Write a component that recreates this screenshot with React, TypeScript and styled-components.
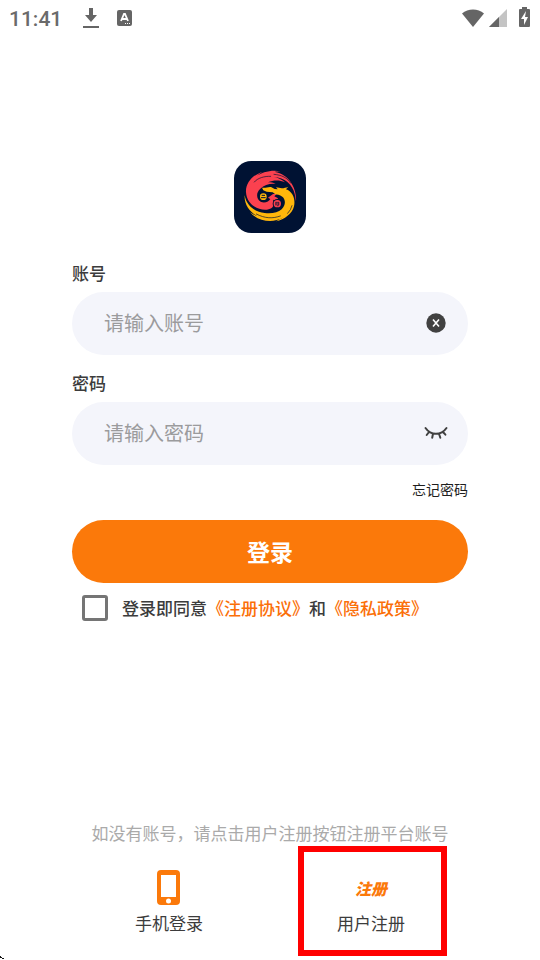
import React, { useState } from "react";
import styled, { createGlobalStyle } from "styled-components";

const GlobalStyle = createGlobalStyle`
  * { box-sizing: border-box; }
  body {
    margin: 0;
    background: #fff;
    color: #3c3c3c;
    font-family: "Noto Sans CJK SC", sans-serif;
  }
  button, input { font-family: inherit; }
`;

const Page = styled.div`
  position: relative;
  display: flex;
  flex-direction: column;
  min-height: 100vh;
  overflow: hidden;
`;

const StatusBar = styled.header`
  display: flex;
  justify-content: space-between;
  align-items: center;
  height: 36px;
  padding: 0 9px;
  color: #656565;
`;

const StatusGroup = styled.div<{ $gap: number }>`
  display: flex;
  align-items: center;
  gap: ${(p) => p.$gap}px;
`;

const Clock = styled.span`
  margin-right: 4px;
  padding-top: 2px;
  color: #6a6a6a;
  font: 500 21px/24px Roboto, sans-serif;
`;

const Form = styled.form`
  display: flex;
  flex-direction: column;
  margin-top: 125px;
  padding: 0 72px;
`;

const Logo = styled.svg`
  align-self: center;
  width: 72px;
  height: 72px;
  margin-bottom: 28px;
`;

const Fields = styled.div`
  display: flex;
  flex-direction: column;
  gap: 16px;
  margin-bottom: 14px;
`;

const Field = styled.div`
  display: flex;
  flex-direction: column;
  gap: 7px;
`;

const Label = styled.label`
  font-size: 17px;
  font-weight: 500;
  line-height: 24px;
`;

const InputShell = styled.div`
  display: flex;
  align-items: center;
  height: 63px;
  padding: 0 20px 2px 32px;
  border-radius: 32px;
  background: #f4f5fb;
`;

const TextInput = styled.input`
  flex: 1;
  min-width: 0;
  height: 40px;
  padding: 0;
  border: 0;
  outline: 0;
  background: transparent;
  color: #3c3c3c;
  font-size: 20px;
  &::placeholder { color: #9b9b9d; opacity: 1; }
`;

const IconButton = styled.button`
  display: flex;
  padding: 0;
  border: 0;
  background: none;
  color: #414141;
`;

const ForgotLink = styled.a`
  align-self: flex-end;
  margin-bottom: 21px;
  color: #1e1e1e;
  font-size: 14px;
  line-height: 20px;
  text-decoration: none;
`;

const LoginButton = styled.button`
  height: 63px;
  padding: 0 0 2px;
  border: 0;
  border-radius: 32px;
  background: #fb790a;
  color: #fff;
  font-size: 23px;
  font-weight: 700;
`;

const Agreement = styled.div`
  display: flex;
  align-items: center;
  gap: 14px;
  margin-top: 12px;
  padding-left: 10px;
  font-size: 17px;
  font-weight: 500;
  line-height: 26px;
  white-space: nowrap;
`;

const Checkbox = styled.input`
  appearance: none;
  flex: none;
  width: 26px;
  height: 26px;
  margin: 0;
  border: 3px solid #757575;
  border-radius: 3px;
  &:checked { background: #fb790a; }
`;

const PolicyLink = styled.a`
  color: #fb6f08;
  text-decoration: none;
`;

const Footer = styled.footer`
  margin-top: auto;
  padding: 0 68px 25px;
`;

const Hint = styled.p`
  margin: 0 0 25px;
  color: #aaa;
  font-size: 17px;
  line-height: 24px;
  text-align: center;
  white-space: nowrap;
`;

const Options = styled.nav`
  display: grid;
  grid-template-columns: 1fr 1fr;
  justify-items: center;
`;

const Option = styled.button`
  position: relative;
  display: flex;
  flex-direction: column;
  align-items: center;
  gap: 5px;
  padding: 0;
  border: 0;
  background: none;
  color: #3c3c3c;
  font-size: 17px;
  line-height: 24px;
`;

const OptionIcon = styled.span`
  display: flex;
  align-items: center;
  justify-content: center;
  height: 36px;
`;

const RegisterMark = styled.span`
  color: #fb790a;
  font-size: 16px;
  font-style: italic;
  font-weight: 900;
  line-height: 20px;
`;

const Highlight = styled.span`
  position: absolute;
  inset: -24px -42px -21px -39px;
  border: 6px solid #f00;
  pointer-events: none;
`;

const Corner = styled.svg`
  position: absolute;
  left: 0;
  bottom: 0;
`;

function DragonLogo() {
  return (
    <Logo viewBox="27 27 216 216" role="img" aria-label="双龙">
      <rect x="27" y="27" width="216" height="216" rx="52" fill="#001233" />
      <path
        fill="#fb414f"
        d="M213 148C216 108 192 68 150 60C153 57 162 59 167 59C145 52 110 60 93 74C101 66 107 62 115 59C82 68 61 94 63 121C65 155 96 176 126 173C146 171 150 156 144 143L155 146L159 139L148 133L155 126L144 126L129 137L136 141C132 149 118 155 107 149C94 141 92 122 106 110C118 98 136 94 152 96C145 92 138 91 129 91C146 84 164 84 180 91C168 80 155 77 147 75C178 76 203 98 209 126Z"
      />
      <path
        fill="none"
        stroke="#001233"
        strokeWidth="2"
        strokeLinecap="round"
        d="M88 90C97 78 119 72 137 73M147 67C170 69 187 77 197 93"
      />
      <path
        fill="#ffb70b"
        d="M111 107C122 109 128 104 138 105L149 111L158 112L153 106C169 110 178 109 190 104L183 112C203 119 212 141 207 163C202 185 179 203 153 208C163 203 169 200 174 196C143 217 98 207 75 181C86 188 90 190 96 191C73 180 57 155 59 130C64 160 87 179 119 183C141 186 159 181 170 172C183 160 182 142 172 134C164 128 156 128 150 126L143 121L125 119L115 115Z"
      />
      <path
        fill="none"
        stroke="#001233"
        strokeWidth="2"
        strokeLinecap="round"
        d="M94 186C120 200 144 200 166 192M188 184Q198 174 201 161"
      />
      <circle cx="115" cy="134" r="13" fill="#001233" />
      <circle cx="115" cy="134" r="10" fill="#ffb70b" />
      <path fill="none" stroke="#001233" strokeWidth="3" d="M110 130H120M108 137H122" />
      <circle cx="157" cy="155" r="14" fill="#001233" />
      <circle cx="157" cy="155" r="11" fill="#fb414f" />
      <path fill="none" stroke="#001233" strokeWidth="2" d="M151 151H163M150 156H164M153 151V161M160 151V161H156" />
    </Logo>
  );
}

const ClearIcon = () => (
  <svg width="24" height="24" viewBox="0 0 24 24" aria-hidden="true">
    <circle cx="12" cy="12" r="9.7" fill="currentColor" />
    <path d="M9 8.5l6 7M15 8.5l-6 7" stroke="#fff" strokeWidth="1.6" />
  </svg>
);

const ClosedEyeIcon = () => (
  <svg
    width="24"
    height="24"
    viewBox="0 0 24 24"
    fill="none"
    stroke="currentColor"
    strokeWidth="2"
    strokeLinecap="round"
    aria-hidden="true"
  >
    <path d="M1.5 7C7 14.8 17 14.8 22.5 7M5 11l-2.3 3M9 12.8l-.8 4M15 12.8l1.3 4M19 11l2.4 2.7" />
  </svg>
);

const PhoneIcon = () => (
  <svg width="24" height="36" viewBox="0 0 24 36" aria-hidden="true">
    <rect width="23" height="35" rx="4" fill="#fb790a" />
    <rect x="4" y="5" width="15" height="22" fill="#fff" />
    <circle cx="11.5" cy="31" r="2.5" fill="#fff" />
  </svg>
);

export default function App() {
  const [account, setAccount] = useState("");
  const [password, setPassword] = useState("");
  const [visible, setVisible] = useState(false);
  const [agreed, setAgreed] = useState(false);

  return (
    <Page>
      <GlobalStyle />
      <StatusBar>
        <StatusGroup $gap={17}>
          <Clock>11:41</Clock>
          <svg width="16" height="22" viewBox="0 0 16 22" fill="currentColor" aria-hidden="true">
            <path d="M6 1h4v7h4l-6 7-6-7h4zM0 19h16v2H0z" />
          </svg>
          <svg width="16" height="18" viewBox="0 0 16 18" aria-hidden="true">
            <rect x="1" y="1" width="15" height="16" rx="2" fill="currentColor" />
            <path d="M5 12l3-7h1l3 7M6 10h5" fill="none" stroke="#fff" strokeWidth="1.8" />
            <path d="M9 14h1v1H9zm2 0h1v1h-1zm2 0h1v1h-1z" fill="#fff" />
          </svg>
        </StatusGroup>
        <StatusGroup $gap={4}>
          <svg width="24" height="20" viewBox="0 0 24 20" fill="currentColor" aria-hidden="true">
            <path d="M1 5.5C7 .3 17 .3 23 5.5L12 19z" />
          </svg>
          <svg width="18" height="20" viewBox="0 0 18 20" aria-hidden="true">
            <path d="M18 1v18H0z" fill="#c4c4c4" />
            <path d="M10 9v10H0z" fill="currentColor" />
          </svg>
          <svg width="20" height="22" viewBox="-8 0 20 22" aria-hidden="true">
            <path d="M3 0h5v2h2q1 0 1 1v16q0 1-1 1H1q-1 0-1-1V3q0-1 1-1h2z" fill="currentColor" />
            <path d="M7 4L2 12h3v6l4-8H6z" fill="#fff" />
          </svg>
        </StatusGroup>
      </StatusBar>

      <Form onSubmit={(e) => e.preventDefault()}>
        <DragonLogo />
        <Fields>
          <Field>
            <Label htmlFor="account">账号</Label>
            <InputShell>
              <TextInput
                id="account"
                placeholder="请输入账号"
                value={account}
                onChange={(e) => setAccount(e.target.value)}
              />
              <IconButton type="button" aria-label="清除" onClick={() => setAccount("")}>
                <ClearIcon />
              </IconButton>
            </InputShell>
          </Field>
          <Field>
            <Label htmlFor="password">密码</Label>
            <InputShell>
              <TextInput
                id="password"
                type={visible ? "text" : "password"}
                placeholder="请输入密码"
                value={password}
                onChange={(e) => setPassword(e.target.value)}
              />
              <IconButton type="button" aria-label="显示密码" onClick={() => setVisible(!visible)}>
                <ClosedEyeIcon />
              </IconButton>
            </InputShell>
          </Field>
        </Fields>
        <ForgotLink href="#forgot">忘记密码</ForgotLink>
        <LoginButton type="submit">登录</LoginButton>
        <Agreement>
          <Checkbox
            id="agree"
            type="checkbox"
            checked={agreed}
            onChange={(e) => setAgreed(e.target.checked)}
          />
          <label htmlFor="agree">
            登录即同意<PolicyLink href="#terms">《注册协议》</PolicyLink>和
            <PolicyLink href="#privacy">《隐私政策》</PolicyLink>
          </label>
        </Agreement>
      </Form>

      <Footer>
        <Hint>如没有账号，请点击用户注册按钮注册平台账号</Hint>
        <Options>
          <Option type="button">
            <OptionIcon><PhoneIcon /></OptionIcon>
            手机登录
          </Option>
          <Option type="button">
            <OptionIcon><RegisterMark>注册</RegisterMark></OptionIcon>
            用户注册
            <Highlight />
          </Option>
        </Options>
      </Footer>
      <Corner width="4" height="5" viewBox="0 0 4 5" aria-hidden="true">
        <path d="M0 1h1v1h1v1h2v1H2V3H0z" fill="#111" />
      </Corner>
    </Page>
  );
}
